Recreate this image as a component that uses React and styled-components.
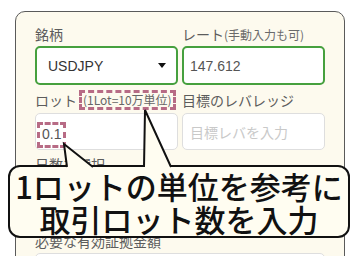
import React from 'react';
import styled, { createGlobalStyle } from 'styled-components';

const GlobalStyle = createGlobalStyle`
    body {
        margin: 0;
        background: #ffffff;
        font-family: "Noto Sans CJK JP", "Noto Sans", sans-serif;
    }
`;

const Page = styled.div`
    position: relative;
    width: 360px;
    height: 256px;
    overflow: hidden;
    box-sizing: border-box;
    padding: 11px 15px 0;
`;

const Card = styled.div`
    width: 330px;
    box-sizing: border-box;
    border: 1px solid #5a5a5a;
    border-radius: 10px;
    background: #fdfaee;
    padding: 10px 19px 40px;
`;

const Grid = styled.div`
    display: grid;
    grid-template-columns: 1fr 1fr;
    column-gap: 4px;
    row-gap: 2px;
`;

const Field = styled.div`
    display: flex;
    flex-direction: column;
    grid-column: ${props => props.$wide ? '1 / span 2' : 'auto'};
`;

const Label = styled.div`
    height: ${props => props.$h || 24}px;
    display: flex;
    align-items: center;
    font-size: 14px;
    color: #5c5c5c;
    white-space: nowrap;
    small {
        font-size: 12px;
        color: #6a6a6a;
    }
`;

const Note = styled.span`
    display: inline-block;
    margin-left: 2px;
    padding: 0 1px;
    border: 3px dashed #b76b85;
    font-size: 12px;
    line-height: 14px;
    color: #666;
`;

const Box = styled.div`
    box-sizing: border-box;
    height: ${props => props.$h || 39}px;
    display: flex;
    align-items: center;
    background: #fff;
    border: ${props => props.$active ? '2px solid #46a03e' : '1px solid #dedede'};
    border-radius: 5px;
    padding: 0 ${props => props.$active ? 6 : 7}px;
    font-family: "Liberation Sans", Arial, "Noto Sans CJK JP", sans-serif;
    font-size: 14px;
    color: ${props => props.$muted ? '#c9c9c9' : '#555'};
`;

const SelectBox = styled(Box)`
    justify-content: space-between;
    padding: 0 10px 0 11px;
    color: #333;
`;

const Caret = styled.span`
    width: 0;
    height: 0;
    border-left: 4.5px solid transparent;
    border-right: 4.5px solid transparent;
    border-top: 5px solid #111;
`;

const Value = styled.span`
    display: inline-block;
    margin-left: -6px;
    margin-top: 6px;
    padding: 2px 2px 3px;
    border: 3px dashed #b76b85;
    line-height: 15px;
`;

const Spacer = styled.div`
    height: ${props => props.$h}px;
`;

const Callout = styled.div`
    position: absolute;
    left: 8px;
    top: 165px;
    width: 342px;
    height: 73px;
    box-sizing: border-box;
    border: 2px solid #111;
    border-radius: 12px;
    background: #fffdf1;
    display: flex;
    flex-direction: column;
    align-items: center;
    justify-content: center;
    font-size: 31px;
    font-weight: 500;
    line-height: 33px;
    color: #111;
    white-space: nowrap;
`;

const Tails = styled.svg`
    position: absolute;
    left: 0;
    top: 0;
    pointer-events: none;
`;

const App = () => {
    return (
        <Page>
            <GlobalStyle />
            <Card>
                <Grid>
                    <Field>
                        <Label>銘柄</Label>
                        <SelectBox $active>
                            USDJPY
                            <Caret />
                        </SelectBox>
                    </Field>
                    <Field>
                        <Label>レート<small>(手動入力も可)</small></Label>
                        <Box $active>147.612</Box>
                    </Field>
                    <Field>
                        <Label $h={26}>ロット<Note>(1Lot=10万単位)</Note></Label>
                        <Box $h={37}>
                            <Value>0.1</Value>
                        </Box>
                    </Field>
                    <Field>
                        <Label $h={26}>目標のレバレッジ</Label>
                        <Box $h={37} $muted>目標レバを入力</Box>
                    </Field>
                    <Field $wide>
                        <Label>日数を選択</Label>
                        <SelectBox>
                            1日
                            <Caret />
                        </SelectBox>
                        <Spacer $h={12} />
                    </Field>
                    <Field $wide>
                        <Label>必要な有効証拠金額</Label>
                        <Box $muted>&nbsp;</Box>
                    </Field>
                </Grid>
            </Card>
            <Callout>
                <span>1ロットの単位を参考に</span>
                <span>取引ロット数を入力</span>
            </Callout>
            <Tails width="360" height="256" viewBox="0 0 360 256">
                <path d="M67 167 L64 144 L93 167" fill="#fffdf1" stroke="#111" strokeWidth="2" />
                <path d="M144 167 L145 110 L171 167" fill="#fffdf1" stroke="#111" strokeWidth="2" />
            </Tails>
        </Page>
    );
};

export default App;
